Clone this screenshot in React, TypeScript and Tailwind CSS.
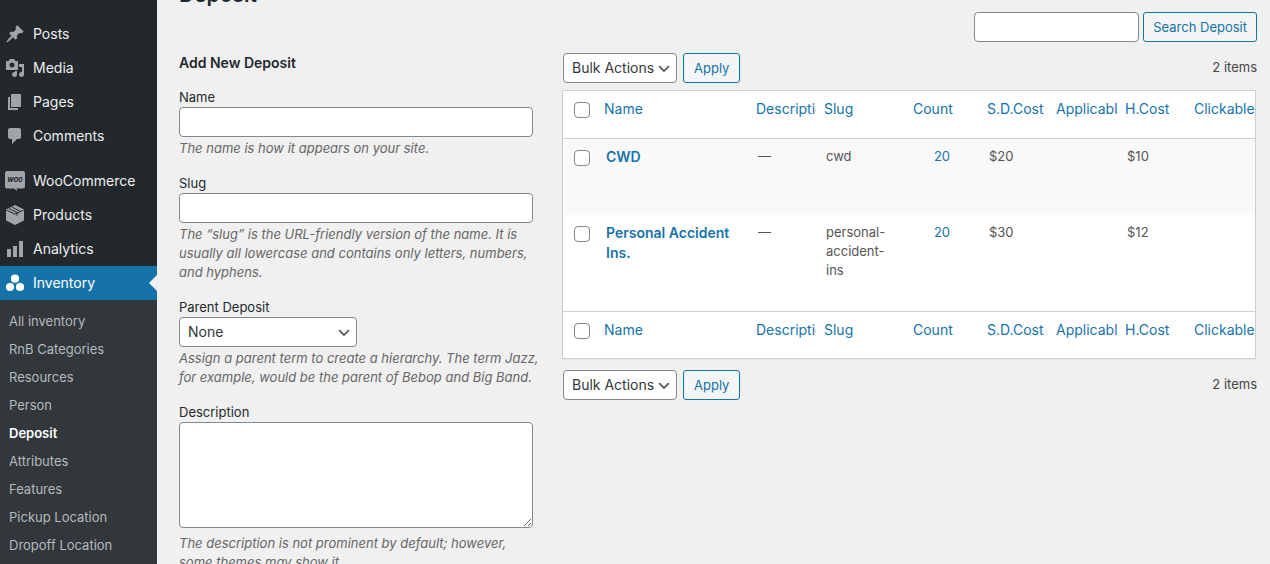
import { useState } from 'react';
import type { ReactNode } from 'react';

interface MenuItem {
  label: string;
  icon: ReactNode;
}

function Icon({ children }: { children: ReactNode }) {
  return (
    <svg viewBox="0 0 20 20" className="w-5 h-5 shrink-0 fill-current" aria-hidden="true">
      {children}
    </svg>
  );
}

const CONTENT_MENU: MenuItem[] = [
  {
    label: 'Posts',
    icon: (
      <path d="M10.44 3.02l1.82-1.82 6.36 6.35-1.83 1.82c-1.05-.68-2.48-.57-3.41.36l-.75.75c-.92.93-1.04 2.35-.35 3.41l-1.83 1.82-2.41-2.41-2.8 2.79c-.42.42-3.38 2.71-3.8 2.29s1.86-3.39 2.28-3.81l2.79-2.79L4.1 9.36l1.83-1.82c1.05.69 2.48.57 3.4-.36l.75-.75c.93-.92 1.05-2.35.36-3.41z" />
    ),
  },
  {
    label: 'Media',
    icon: (
      <path d="M13 11V4c0-.55-.45-1-1-1h-1.67L9 1H5L3.67 3H2c-.55 0-1 .45-1 1v7c0 .55.45 1 1 1h10c.55 0 1-.45 1-1zM7 4.5c1.38 0 2.5 1.12 2.5 2.5S8.38 9.5 7 9.5 4.5 8.38 4.5 7 5.62 4.5 7 4.5zM14 6h5v10.5c0 1.38-1.12 2.5-2.5 2.5S14 17.88 14 16.5s1.12-2.5 2.5-2.5c.17 0 .34.02.5.05V9h-3V6zm-4 8.05V13h2v3.5c0 1.38-1.12 2.5-2.5 2.5S7 17.88 7 16.5 8.12 14 9.5 14c.17 0 .34.02.5.05z" />
    ),
  },
  { label: 'Pages', icon: <path d="M6 15V2h10v13H6zm-1 1h8v2H3V5h2v11z" /> },
  {
    label: 'Comments',
    icon: <path d="M5 2h9c1.1 0 2 .9 2 2v7c0 1.1-.9 2-2 2h-2l-5 5v-5H5c-1.1 0-2-.9-2-2V4c0-1.1.9-2 2-2z" />,
  },
];

const SHOP_MENU: MenuItem[] = [
  {
    label: 'WooCommerce',
    icon: (
      <>
        <path d="M2 0h16a2 2 0 0 1 2 2v13.500a2 2 0 0 1-2 2h-6.500l.8 2.500-3.300-2.500H2a2 2 0 0 1-2-2V2a2 2 0 0 1 2-2z" />
        <text x="10" y="11" textAnchor="middle" className="fill-[#23282d] text-[6px] font-extrabold italic">
          WOO
        </text>
      </>
    ),
  },
  {
    label: 'Products',
    icon: (
      <>
        <path d="M10 0l9 4.500v11L10 20l-9-4.500v-11z" />
        <path d="M1.500 5L10 9.200 18.500 5M4 3.500l8 4v3.200M7 2.100l8 4.200" className="fill-none stroke-[#23282d]" />
      </>
    ),
  },
  { label: 'Analytics', icon: <path d="M18 18V2h-4v16h4zm-6 0V7H8v11h4zm-6 0v-8H2v8h4z" /> },
];

const SUBMENU = [
  'All inventory',
  'RnB Categories',
  'Resources',
  'Person',
  'Deposit',
  'Attributes',
  'Features',
  'Pickup Location',
  'Dropoff Location',
];

const COLUMNS = ['Name', 'Description', 'Slug', 'Count', 'S.D.Cost', 'Applicable', 'H.Cost', 'Clickable'];

const DEPOSITS = [
  { name: 'CWD', slug: 'cwd', count: 20, sdCost: '$20', hCost: '$10' },
  { name: 'Personal Accident Ins.', slug: 'personal-accident-ins', count: 20, sdCost: '$30', hCost: '$12' },
];

const fieldClass = 'bg-white border border-[#7e8993] rounded text-sm text-[#32373c]';
const buttonClass =
  'h-[30px] pt-0.5 border border-[#1573a6] rounded-[3px] bg-[#f3f5f6] text-[13px] text-[#1573a6] whitespace-nowrap hover:bg-[#f1f1f1]';
const checkboxClass =
  'block w-4 h-4 appearance-none rounded border border-[#7e8993] bg-white checked:bg-[#1573aa]';

function MenuLink({ item }: { item: MenuItem }) {
  return (
    <li>
      <a href="#" className="flex items-center gap-2 h-[34px] pl-[5px] text-sm text-[#eee]">
        <span className="text-[#a0a5aa]">
          <Icon>{item.icon}</Icon>
        </span>
        {item.label}
      </a>
    </li>
  );
}

function Sidebar() {
  return (
    <nav className="w-[157px] shrink-0 bg-[#23282d] pt-[17px]">
      <ul>
        {CONTENT_MENU.map((item) => (
          <MenuLink key={item.label} item={item} />
        ))}
      </ul>
      <ul className="mt-[11px]">
        {SHOP_MENU.map((item) => (
          <MenuLink key={item.label} item={item} />
        ))}
        <li>
          <a
            href="#"
            className="relative flex items-center gap-2 h-[34px] pl-[5px] bg-[#1573aa] text-sm text-white"
          >
            <Icon>
              <circle cx="10" cy="5.700" r="4.100" />
              <circle cx="5" cy="14" r="4.100" />
              <circle cx="15" cy="14" r="4.100" />
            </Icon>
            Inventory
            <span className="absolute right-0 top-[9px] border-y-8 border-r-8 border-y-transparent border-r-[#f0f0f0]" />
          </a>
          <ul className="bg-[#32373c] py-2">
            {SUBMENU.map((label) => (
              <li key={label}>
                <a
                  href="#"
                  className={
                    label === 'Deposit'
                      ? 'flex items-center h-7 pl-[9px] text-[13px] font-semibold text-white'
                      : 'flex items-center h-7 pl-[9px] text-[13px] text-[#b4b9be]'
                  }
                >
                  {label}
                </a>
              </li>
            ))}
          </ul>
        </li>
      </ul>
    </nav>
  );
}

function Select({ id, label, options, width }: { id: string; label?: string; options: string[]; width: string }) {
  return (
    <div className={`relative ${width}`}>
      <select
        id={id}
        aria-label={label}
        className={`${fieldClass} block w-full h-[30px] pl-2 pr-5 appearance-none`}
      >
        {options.map((option) => (
          <option key={option}>{option}</option>
        ))}
      </select>
      <svg
        viewBox="0 0 20 20"
        className="absolute right-[5px] top-2 w-4 h-4 fill-[#555] pointer-events-none"
        aria-hidden="true"
      >
        <path d="M5 6l5 5 5-5 2 1-7 7-7-7 2-1z" />
      </svg>
    </div>
  );
}

function Field({ id, label, hint, children }: { id: string; label: string; hint: string; children: ReactNode }) {
  return (
    <div className="mb-4">
      <label htmlFor={id} className="block text-[13px] leading-[19px] text-[#23282d]">
        {label}
      </label>
      {children}
      <p className="mt-0.5 -mr-2 text-[13px] leading-[19px] italic text-[#666]">{hint}</p>
    </div>
  );
}

function AddForm() {
  return (
    <form onSubmit={(e) => e.preventDefault()}>
      <h2 className="mb-[15px] text-sm leading-5 font-semibold text-[#23282d]">Add New Deposit</h2>
      <Field id="tag-name" label="Name" hint="The name is how it appears on your site.">
        <input id="tag-name" type="text" className={`${fieldClass} block w-full h-[30px] px-2`} />
      </Field>
      <Field
        id="tag-slug"
        label="Slug"
        hint="The “slug” is the URL-friendly version of the name. It is usually all lowercase and contains only letters, numbers, and hyphens."
      >
        <input id="tag-slug" type="text" className={`${fieldClass} block w-full h-[30px] px-2`} />
      </Field>
      <Field
        id="parent"
        label="Parent Deposit"
        hint="Assign a parent term to create a hierarchy. The term Jazz, for example, would be the parent of Bebop and Big Band."
      >
        <Select id="parent" options={['None', 'CWD', 'Personal Accident Ins.']} width="w-[178px]" />
      </Field>
      <Field
        id="tag-description"
        label="Description"
        hint="The description is not prominent by default; however, some themes may show it."
      >
        <textarea id="tag-description" className={`${fieldClass} block w-full h-[106px] mb-1.5 px-2 py-1 resize`} />
      </Field>
    </form>
  );
}

function BulkActions({ position }: { position: string }) {
  return (
    <div className="flex items-center gap-1.5 pl-px">
      <Select
        id={`bulk-${position}`}
        label="Bulk Actions"
        options={['Bulk Actions', 'Delete']}
        width="w-[114px]"
      />
      <button type="button" className={`${buttonClass} px-2.5`}>
        Apply
      </button>
      <span className="ml-auto text-[13px] text-[#444]">2 items</span>
    </div>
  );
}

function HeadingRow({ checked, onToggle }: { checked: boolean; onToggle: () => void }) {
  return (
    <tr className="h-[47px]">
      <td className="pt-[11px] pl-[11px] align-top">
        <input type="checkbox" aria-label="Select all" checked={checked} onChange={onToggle} className={checkboxClass} />
      </td>
      {COLUMNS.map((column) => (
        <th key={column} scope="col" className="pt-2 pl-2 align-top text-left text-sm leading-5 font-normal">
          <a href="#" className="block overflow-hidden text-[#1573aa]">
            {column}
          </a>
        </th>
      ))}
    </tr>
  );
}

function DepositTable() {
  const [selected, setSelected] = useState<string[]>([]);
  const allSelected = selected.length === DEPOSITS.length;

  const toggleAll = () => setSelected(allSelected ? [] : DEPOSITS.map((d) => d.name));
  const toggle = (name: string) =>
    setSelected((prev) => (prev.includes(name) ? prev.filter((n) => n !== name) : [...prev, name]));

  return (
    <div className="mr-px border border-[#ccd0d4] bg-white shadow-xs">
      <table className="w-full table-fixed border-collapse text-[13px] leading-[19px] text-[#555]">
        <colgroup>
          <col className="w-[33px]" />
          <col />
          <col className="w-[68px]" />
          <col className="w-[89px]" />
          <col className="w-[74px]" />
          <col className="w-[69px]" />
          <col className="w-[69px]" />
          <col className="w-[69px]" />
          <col className="w-[69px]" />
        </colgroup>
        <thead className="border-b border-[#ccd0d4]">
          <HeadingRow checked={allSelected} onToggle={toggleAll} />
        </thead>
        <tbody>
          {DEPOSITS.map((deposit) => (
            <tr key={deposit.name} className="odd:bg-[#f9f9f9] align-top">
              <td className="pt-[11px] pl-[11px]">
                <input
                  type="checkbox"
                  aria-label={`Select ${deposit.name}`}
                  checked={selected.includes(deposit.name)}
                  onChange={() => toggle(deposit.name)}
                  className={checkboxClass}
                />
              </td>
              <td className="px-2.5 pt-2 pb-12 text-sm leading-5">
                <a href="#" className="block font-semibold text-[#1573aa]">
                  {deposit.name}
                </a>
              </td>
              <td className="px-2.5 py-2">—</td>
              <td className="px-2.5 py-2">{deposit.slug}</td>
              <td className="px-2.5 py-2 text-center">
                <a href="#" className="text-[#1573aa]">
                  {deposit.count}
                </a>
              </td>
              <td className="px-2.5 py-2">{deposit.sdCost}</td>
              <td />
              <td className="px-2.5 py-2">{deposit.hCost}</td>
              <td />
            </tr>
          ))}
        </tbody>
        <tfoot className="border-t border-[#ccd0d4]">
          <HeadingRow checked={allSelected} onToggle={toggleAll} />
        </tfoot>
      </table>
    </div>
  );
}

export default function App() {
  return (
    <div className="flex h-screen overflow-hidden bg-[#f0f0f0] font-['Inter',sans-serif]">
      <Sidebar />
      <main className="flex-1 min-w-0 pl-[22px] pr-[13px]">
        <h1 className="-mt-5 text-[21px] leading-[30px] font-semibold text-[#23282d]">Deposit</h1>
        <form className="flex justify-end gap-1 mt-0.5 mb-[11px]" onSubmit={(e) => e.preventDefault()}>
          <input type="search" aria-label="Search Deposit" className={`${fieldClass} w-[165px] h-[30px] px-2`} />
          <button type="submit" className={`${buttonClass} px-[9px]`}>
            Search Deposit
          </button>
        </form>
        <div className="grid grid-cols-[354px_1fr] gap-[29px]">
          <AddForm />
          <section>
            <BulkActions position="top" />
            <div className="mt-[7px] mb-[11px]">
              <DepositTable />
            </div>
            <BulkActions position="bottom" />
          </section>
        </div>
      </main>
    </div>
  );
}
